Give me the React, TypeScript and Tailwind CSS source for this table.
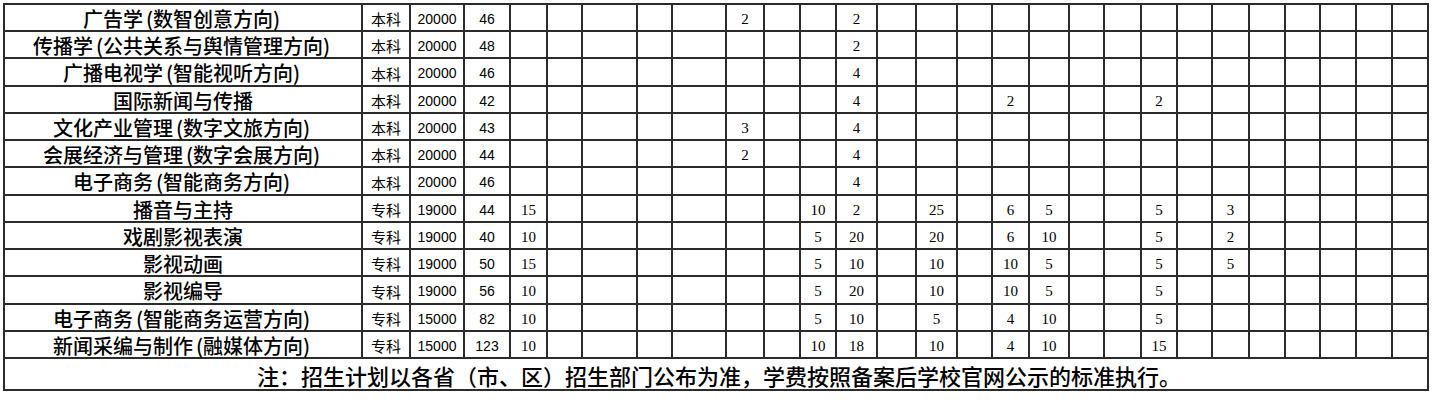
import React from 'react'

type Row = {
  name: string
  level: string
  fee: string
  count: string
  cells: Record<number, string>
}

const rows: Row[] = [
  { name: '广告学(数智创意方向)', level: '本科', fee: '20000', count: '46', cells: { 6: '2', 9: '2' } },
  { name: '传播学(公共关系与舆情管理方向)', level: '本科', fee: '20000', count: '48', cells: { 9: '2' } },
  { name: '广播电视学(智能视听方向)', level: '本科', fee: '20000', count: '46', cells: { 9: '4' } },
  { name: '国际新闻与传播', level: '本科', fee: '20000', count: '42', cells: { 9: '4', 13: '2', 17: '2' } },
  { name: '文化产业管理(数字文旅方向)', level: '本科', fee: '20000', count: '43', cells: { 6: '3', 9: '4' } },
  { name: '会展经济与管理(数字会展方向)', level: '本科', fee: '20000', count: '44', cells: { 6: '2', 9: '4' } },
  { name: '电子商务(智能商务方向)', level: '本科', fee: '20000', count: '46', cells: { 9: '4' } },
  {
    name: '播音与主持',
    level: '专科',
    fee: '19000',
    count: '44',
    cells: { 1: '15', 8: '10', 9: '2', 11: '25', 13: '6', 14: '5', 17: '5', 19: '3' },
  },
  {
    name: '戏剧影视表演',
    level: '专科',
    fee: '19000',
    count: '40',
    cells: { 1: '10', 8: '5', 9: '20', 11: '20', 13: '6', 14: '10', 17: '5', 19: '2' },
  },
  {
    name: '影视动画',
    level: '专科',
    fee: '19000',
    count: '50',
    cells: { 1: '15', 8: '5', 9: '10', 11: '10', 13: '10', 14: '5', 17: '5', 19: '5' },
  },
  {
    name: '影视编导',
    level: '专科',
    fee: '19000',
    count: '56',
    cells: { 1: '10', 8: '5', 9: '20', 11: '10', 13: '10', 14: '5', 17: '5' },
  },
  {
    name: '电子商务(智能商务运营方向)',
    level: '专科',
    fee: '15000',
    count: '82',
    cells: { 1: '10', 8: '5', 9: '10', 11: '5', 13: '4', 14: '10', 17: '5' },
  },
  {
    name: '新闻采编与制作(融媒体方向)',
    level: '专科',
    fee: '15000',
    count: '123',
    cells: { 1: '10', 8: '10', 9: '18', 11: '10', 13: '4', 14: '10', 17: '15' },
  },
]

const dataCols = Array.from({ length: 24 }, (_, i) => i + 1)

// half-width parens sit in a half-em box, like the spreadsheet font
function Name({ text }: { text: string }) {
  return (
    <>
      {text.split(/([()])/).map((part, i) =>
        part === '(' ? (
          <span key={i} className="inline-block w-[0.5em] text-right">
            (
          </span>
        ) : part === ')' ? (
          <span key={i} className="inline-block w-[0.5em] text-left">
            )
          </span>
        ) : (
          <span key={i}>{part}</span>
        ),
      )}
    </>
  )
}

export default function App() {
  return (
    <div className="min-h-screen bg-white pl-[3px] pt-[3px]">
      {/* Plan table: dark gap = cell borders */}
      <div className="grid w-max gap-[2px] bg-[#2b2b2b] p-[2px] grid-cols-[356px_46px_52px_44px_35px_33px_53px_33px_52px_36px_34px_34px_39px_37px_39px_33px_35px_38px_33px_35px_34px_33px_35px_34px_33px_34px_34px_34px] grid-rows-[25px_25px_26px_25px_25px_25px_26px_25px_25px_25px_26px_25px_25px_30px]">
        {rows.map((row) => (
          <React.Fragment key={row.name}>
            <div className="flex items-center justify-center bg-white pt-[2px] text-[20px] font-medium leading-none text-black [font-family:'Noto_Sans_CJK_SC',sans-serif]">
              <Name text={row.name} />
            </div>
            <div className="flex items-center justify-center bg-white pt-[2px] text-[15px] leading-none text-black [font-family:'Noto_Sans_CJK_SC',sans-serif]">
              {row.level}
            </div>
            <div className="flex items-center justify-center bg-white pt-[2px] text-[14px] leading-none text-black [font-family:'Liberation_Sans',sans-serif]">
              {row.fee}
            </div>
            <div className="flex items-center justify-center bg-white pt-[2px] text-[14px] leading-none text-black [font-family:'Liberation_Sans',sans-serif]">
              {row.count}
            </div>
            {dataCols.map((c) => (
              <div
                key={c}
                className="flex items-center justify-center bg-white pt-[3px] text-[15px] leading-none text-black [font-family:'Liberation_Serif',serif]"
              >
                {row.cells[c] ?? ''}
              </div>
            ))}
          </React.Fragment>
        ))}
        <div className="col-span-full flex items-center justify-center bg-white pl-[6px] pt-[1px] text-[22px] font-medium leading-none text-black [font-family:'Noto_Sans_CJK_SC',sans-serif]">
          注：招生计划以各省（市、区）招生部门公布为准，学费按照备案后学校官网公示的标准执行。
        </div>
      </div>
    </div>
  )
}
